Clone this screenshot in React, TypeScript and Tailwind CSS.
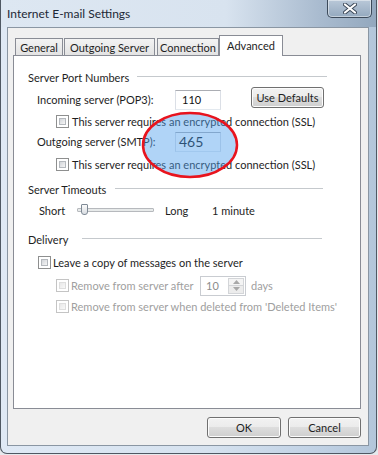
import React from "react";

const FONT = "font-['Lato',sans-serif]";

function CheckBox({ disabled = false }: { disabled?: boolean }) {
  return (
    <span
      className={`relative inline-block w-[13px] h-[13px] shrink-0 border bg-white ${
        disabled ? "border-[#c4c4c4]" : "border-[#8e8f8f]"
      }`}
    >
      <span
        className={`absolute inset-[2px] border ${
          disabled
            ? "border-[#dedede] bg-[linear-gradient(135deg,#e8e8e8,#f8f8f8)]"
            : "border-[#b4b8bd] bg-[linear-gradient(135deg,#d2d5d9,#f6f6f6)]"
        }`}
      />
    </span>
  );
}

function Header({ label, labelW, mr }: { label: string; labelW: string; mr: string }) {
  return (
    <div className="flex items-center h-[16px] pl-[14px]">
      <span className={`${labelW} shrink-0 text-[11px] text-[#1e1e1e] leading-none whitespace-nowrap`}>{label}</span>
      <div className={`flex-1 h-[2px] border-t border-[#c5c9cd] border-b-white ${mr}`} />
    </div>
  );
}

function TextBox({ value, big = false }: { value: string; big?: boolean }) {
  return (
    <div className="w-[46px] h-[20px] shrink-0 border border-[#abadb3] border-b-[#e3e9ef] border-l-[#dbdfe6] border-r-[#dbdfe6] bg-white flex items-center">
      <span className={`${big ? "text-[14px] pl-[3px]" : "text-[11px] pl-[6px]"} leading-none text-[#111]`}>{value}</span>
    </div>
  );
}

function Btn({ label, w }: { label: string; w: string }) {
  return (
    <div
      className={`${w} h-[21px] shrink-0 rounded-[3px] border border-[#707070] bg-[linear-gradient(to_bottom,#f2f2f2_0%,#ebebeb_50%,#dddddd_50%,#cfcfcf_100%)] shadow-[inset_0_0_0_1px_#fcfcfc] flex items-center justify-center text-[11px] text-[#1e1e1e] leading-none whitespace-nowrap`}
    >
      {label}
    </div>
  );
}

const TAB_INACTIVE =
  "h-[17px] border border-b-0 border-[#898c95] bg-[linear-gradient(to_bottom,#f3f3f3,#e3e3e3)] flex items-center justify-center text-[11px] leading-none whitespace-nowrap";

export default function App() {
  return (
    <div className={`w-[378px] h-[455px] bg-[#e6e9ed] overflow-hidden relative ${FONT}`}>
      <div className="w-[377px] h-[454px] border border-t-0 border-[#4f5863] rounded-b-[7px] bg-[linear-gradient(to_right,#dfe9f5_0%,#d6e2ef_55%,#c0d1e4_85%,#b3c6da_100%)] flex flex-col">
        {/* title bar */}
        <div className="h-[27px] shrink-0 relative flex items-center bg-[linear-gradient(to_right,#dde7f2_0%,#d8e3ef_60%,#a9bbcf_85%,#93a8be_100%)]">
          <span className="ml-[6px] text-[12px] text-[#1c2836] leading-none whitespace-nowrap">Internet E-mail Settings</span>
          <div className="absolute left-[326px] top-0 w-[45px] h-[18px] rounded-b-[5px] border border-t-0 border-[#3c4a5a] bg-[linear-gradient(to_bottom,#b9c8d8,#94a9bf)] shadow-[inset_0_0_0_1px_rgba(255,255,255,0.45)] flex items-center justify-center">
            <svg width="14" height="11" viewBox="0 0 14 11">
              <path d="M2 1.5 L12 9.5 M12 1.5 L2 9.5" stroke="#3a4656" strokeWidth="4" strokeLinecap="round" />
              <path d="M2 1.5 L12 9.5 M12 1.5 L2 9.5" stroke="#ffffff" strokeWidth="2.2" strokeLinecap="round" />
            </svg>
          </div>
        </div>

        {/* client area */}
        <div className="ml-[6px] mr-[7px] h-[419px] shrink-0 border border-[#8a96a3] bg-[#f0f0f0] pl-[5px] pr-[7px] pt-[7px] text-[#1e1e1e]">
          {/* tabs */}
          <div className="flex items-end h-[20px] relative z-10">
            <div className={`ml-[2px] w-[48px] ${TAB_INACTIVE}`}>General</div>
            <div className={`ml-[1px] w-[91px] ${TAB_INACTIVE}`}>Outgoing Server</div>
            <div className={`ml-[2px] w-[62px] ${TAB_INACTIVE}`}>Connection</div>
            <div className="w-[64px] h-[21px] -mb-px border border-b-0 border-[#898c95] bg-white flex items-start justify-center pt-[4px] text-[11px] leading-none whitespace-nowrap">
              Advanced
            </div>
          </div>

          {/* panel */}
          <div className="w-[348px] h-[354px] border border-[#898c95] bg-white relative">
            <div className="mt-[13px]">
              <Header label="Server Port Numbers" labelW="w-[109px]" mr="mr-[33px]" />
            </div>
            <div className="mt-[5px] h-[19px] flex items-center pl-[23px]">
              <span className="w-[138px] shrink-0 text-[11px] leading-none whitespace-nowrap">Incoming server (POP3):</span>
              <TextBox value="110" />
              <div className="ml-[30px] self-start -mt-[3px]">
                <Btn label="Use Defaults" w="w-[73px]" />
              </div>
            </div>
            <div className="mt-[6px] h-[13px] flex items-center pl-[42px]">
              <CheckBox />
              <span className="ml-[3px] text-[11px] leading-none whitespace-nowrap">
                This server requires an encrypted connection (SSL)
              </span>
            </div>
            <div className="mt-[4px] h-[19px] flex items-center pl-[23px]">
              <span className="w-[138px] shrink-0 text-[11px] leading-none whitespace-nowrap">Outgoing server (SMTP):</span>
              <TextBox value="465" big />
            </div>
            <div className="mt-[7px] h-[13px] flex items-center pl-[42px]">
              <CheckBox />
              <span className="ml-[3px] text-[11px] leading-none whitespace-nowrap">
                This server requires an encrypted connection (SSL)
              </span>
            </div>

            <div className="mt-[10px]">
              <Header label="Server Timeouts" labelW="w-[87px]" mr="mr-[37px]" />
            </div>
            <div className="mt-[3px] h-[20px] flex items-center pl-[25px]">
              <span className="w-[38px] shrink-0 text-[11px] leading-none">Short</span>
              <div className="relative w-[77px] h-[20px] shrink-0">
                <div className="absolute left-0 right-0 top-[8px] h-[4px] border border-[#b6b9bd] bg-[#e7eaea] rounded-[1px]" />
                <div className="absolute left-[4px] top-[4px] w-[7px] h-[11px] border border-[#7f8a96] rounded-t-[1px] rounded-b-[3px] bg-[linear-gradient(to_bottom,#fafafa,#d9dde2)]" />
              </div>
              <span className="ml-[11px] w-[47px] shrink-0 text-[11px] leading-none">Long</span>
              <span className="text-[11px] leading-none whitespace-nowrap">1 minute</span>
            </div>

            <div className="mt-[11px]">
              <Header label="Delivery" labelW="w-[54px]" mr="mr-[38px]" />
            </div>
            <div className="mt-[9px] h-[13px] flex items-center pl-[24px]">
              <CheckBox />
              <span className="ml-[2px] text-[11px] leading-none whitespace-nowrap">
                Leave a copy of messages on the server
              </span>
            </div>
            <div className="mt-[7px] h-[19px] flex items-center pl-[42px]">
              <CheckBox disabled />
              <span className="ml-[2px] w-[129px] shrink-0 text-[11px] leading-none text-[#a0a0a0] whitespace-nowrap">
                Remove from server after
              </span>
              <div className="w-[46px] h-[20px] shrink-0 border border-[#c9ccd1] bg-white flex items-center relative">
                <span className="pl-[5px] text-[11px] leading-none text-[#8c8c8c]">10</span>
                <div className="absolute right-[1px] top-[1px] bottom-[1px] w-[16px] flex flex-col">
                  <div className="flex-1 border border-[#d3d5d8] bg-[#f4f4f4] flex items-center justify-center">
                    <svg width="7" height="4" viewBox="0 0 7 4"><path d="M0 4 L3.5 0 L7 4 Z" fill="#a8a8a8" /></svg>
                  </div>
                  <div className="flex-1 border border-t-0 border-[#d3d5d8] bg-[#ececec] flex items-center justify-center">
                    <svg width="7" height="4" viewBox="0 0 7 4"><path d="M0 0 L3.5 4 L7 0 Z" fill="#a8a8a8" /></svg>
                  </div>
                </div>
              </div>
              <span className="ml-[5px] text-[11px] leading-none text-[#a0a0a0]">days</span>
            </div>
            <div className="mt-[5px] h-[13px] flex items-center pl-[42px]">
              <CheckBox disabled />
              <span className="ml-[2px] text-[11px] leading-none text-[#a0a0a0] whitespace-nowrap">
                Remove from server when deleted from 'Deleted Items'
              </span>
            </div>
          </div>

          {/* buttons */}
          <div className="mt-[8px] flex justify-end gap-[7px]">
            <Btn label="OK" w="w-[74px]" />
            <Btn label="Cancel" w="w-[73px]" />
          </div>
        </div>
      </div>

      {/* highlight ellipse */}
      <svg className="absolute left-0 top-0 pointer-events-none" width="378" height="455">
        <ellipse cx="190" cy="145" rx="47" ry="32" fill="#4fa0ee" fillOpacity="0.45" stroke="#e8141e" strokeWidth="2.5" />
      </svg>
    </div>
  );
}
